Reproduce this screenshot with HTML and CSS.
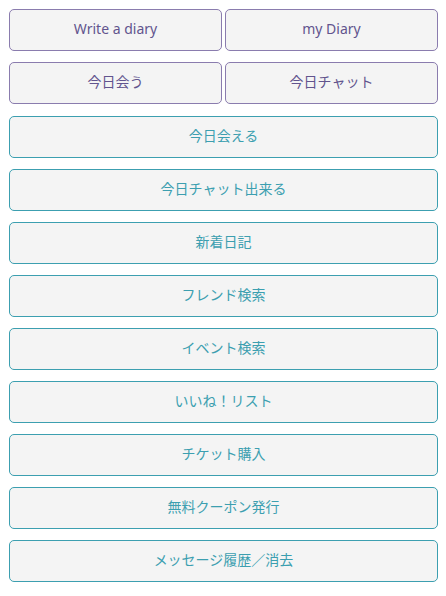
FILE: index.html
```html
<!DOCTYPE html>
<html lang="ja">
<head>
  <meta charset="UTF-8">
  <title>メニュー</title>
  <link rel="stylesheet" href="styles.css">
</head>
<body>
  <div class="menu">
    <div class="fila">
      <a class="boton morado" href="#">Write a diary</a>
      <a class="boton morado" href="#">my Diary</a>
    </div>
    <div class="fila">
      <a class="boton morado" href="#">今日会う</a>
      <a class="boton morado" href="#">今日チャット</a>
    </div>
    <a class="boton" href="#">今日会える</a>
    <a class="boton" href="#">今日チャット出来る</a>
    <a class="boton" href="#">新着日記</a>
    <a class="boton" href="#">フレンド検索</a>
    <a class="boton" href="#">イベント検索</a>
    <a class="boton" href="#">いいね！リスト</a>
    <a class="boton" href="#">チケット購入</a>
    <a class="boton" href="#">無料クーポン発行</a>
    <a class="boton" href="#">メッセージ履歴／消去</a>
  </div>
</body>
</html>
```

FILE: styles.css
```css
body {
  margin: 0;
  background-color: #fff;
  font-family: "Noto Sans", "Noto Sans CJK JP", sans-serif;
}

.menu {
  display: flex;
  flex-direction: column;
  gap: 11px;
  padding: 9px 8px 0 9px;
}

.fila {
  display: grid;
  grid-template-columns: 1fr 1fr;
  gap: 3px;
}

.fila + .boton {
  margin-top: 1px;
}

.boton {
  display: flex;
  align-items: center;
  justify-content: center;
  height: 42px;
  box-sizing: border-box;
  padding-bottom: 4px;
  background-color: #f4f4f4;
  border: 1px solid #3c9fb0;
  border-radius: 5px;
  color: #3c9fb0;
  font-size: 14px;
  text-decoration: none;
}

.boton.morado {
  border-color: #8a7cae;
  color: #62548e;
}
```
